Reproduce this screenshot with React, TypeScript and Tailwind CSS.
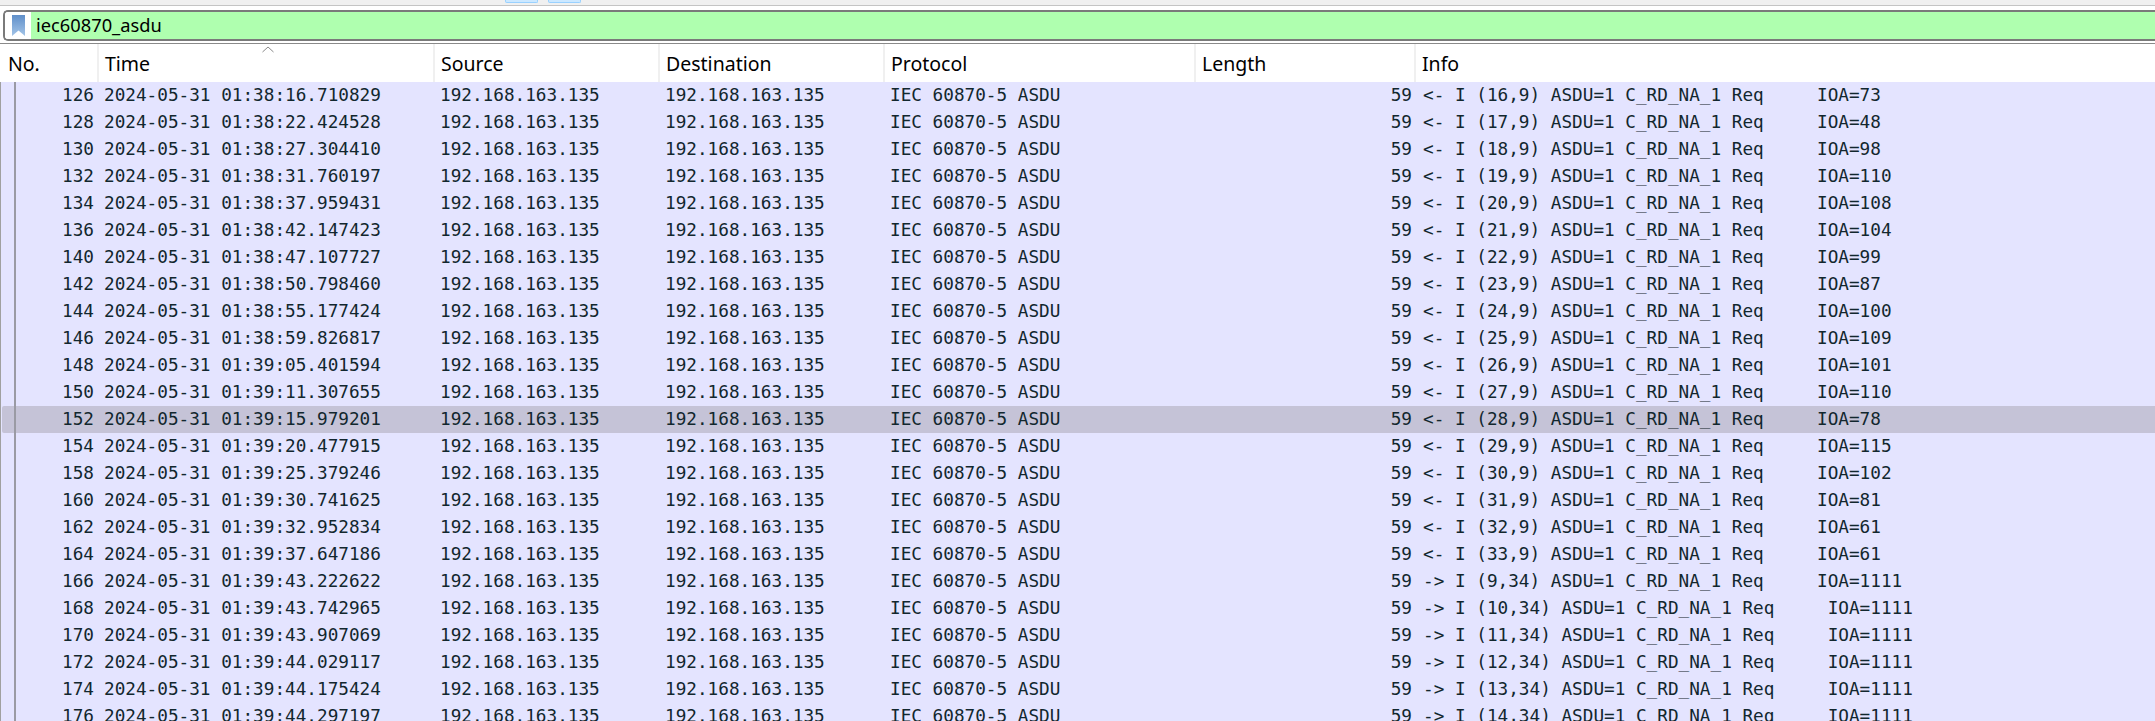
const rows: [string, string, string][] = [
  ["126", "01:38:16.710829", "<- I (16,9) ASDU=1 C_RD_NA_1 Req     IOA=73"],
  ["128", "01:38:22.424528", "<- I (17,9) ASDU=1 C_RD_NA_1 Req     IOA=48"],
  ["130", "01:38:27.304410", "<- I (18,9) ASDU=1 C_RD_NA_1 Req     IOA=98"],
  ["132", "01:38:31.760197", "<- I (19,9) ASDU=1 C_RD_NA_1 Req     IOA=110"],
  ["134", "01:38:37.959431", "<- I (20,9) ASDU=1 C_RD_NA_1 Req     IOA=108"],
  ["136", "01:38:42.147423", "<- I (21,9) ASDU=1 C_RD_NA_1 Req     IOA=104"],
  ["140", "01:38:47.107727", "<- I (22,9) ASDU=1 C_RD_NA_1 Req     IOA=99"],
  ["142", "01:38:50.798460", "<- I (23,9) ASDU=1 C_RD_NA_1 Req     IOA=87"],
  ["144", "01:38:55.177424", "<- I (24,9) ASDU=1 C_RD_NA_1 Req     IOA=100"],
  ["146", "01:38:59.826817", "<- I (25,9) ASDU=1 C_RD_NA_1 Req     IOA=109"],
  ["148", "01:39:05.401594", "<- I (26,9) ASDU=1 C_RD_NA_1 Req     IOA=101"],
  ["150", "01:39:11.307655", "<- I (27,9) ASDU=1 C_RD_NA_1 Req     IOA=110"],
  ["152", "01:39:15.979201", "<- I (28,9) ASDU=1 C_RD_NA_1 Req     IOA=78"],
  ["154", "01:39:20.477915", "<- I (29,9) ASDU=1 C_RD_NA_1 Req     IOA=115"],
  ["158", "01:39:25.379246", "<- I (30,9) ASDU=1 C_RD_NA_1 Req     IOA=102"],
  ["160", "01:39:30.741625", "<- I (31,9) ASDU=1 C_RD_NA_1 Req     IOA=81"],
  ["162", "01:39:32.952834", "<- I (32,9) ASDU=1 C_RD_NA_1 Req     IOA=61"],
  ["164", "01:39:37.647186", "<- I (33,9) ASDU=1 C_RD_NA_1 Req     IOA=61"],
  ["166", "01:39:43.222622", "-> I (9,34) ASDU=1 C_RD_NA_1 Req     IOA=1111"],
  ["168", "01:39:43.742965", "-> I (10,34) ASDU=1 C_RD_NA_1 Req     IOA=1111"],
  ["170", "01:39:43.907069", "-> I (11,34) ASDU=1 C_RD_NA_1 Req     IOA=1111"],
  ["172", "01:39:44.029117", "-> I (12,34) ASDU=1 C_RD_NA_1 Req     IOA=1111"],
  ["174", "01:39:44.175424", "-> I (13,34) ASDU=1 C_RD_NA_1 Req     IOA=1111"],
  ["176", "01:39:44.297197", "-> I (14,34) ASDU=1 C_RD_NA_1 Req     IOA=1111"],
];

function Head({ label, width, last }: { label: string; width: string; last?: boolean }) {
  return (
    <div className={`${width} h-full shrink-0 ${last ? "" : "border-r-2 border-[#f0f0f0]"} pl-[6px] flex items-center`}>
      <span className="text-[19.5px] text-black pt-[1px]">{label}</span>
    </div>
  );
}

export default function App() {
  return (
    <div className="relative w-[2155px] h-[721px] overflow-hidden bg-white font-['Noto_Sans',sans-serif]">
      {/* toolbar remnant */}
      <div className="h-[6px] bg-[#f0f0f0] border-b border-[#c4c4c4] flex gap-[10px] pl-[505px]">
        <div className="w-[33px] h-[3px] bg-[#cce8ff] border-x border-b border-[#99d1ff] rounded-b-[2px]" />
        <div className="w-[33px] h-[3px] bg-[#cce8ff] border-x border-b border-[#99d1ff] rounded-b-[2px]" />
      </div>
      {/* filter bar */}
      <div className="h-[4px]" />
      <div className="h-[31px] ml-[3px] flex border-y-2 border-l-2 border-[#7a7a7a] rounded-l-[5px] overflow-hidden">
        <div className="w-[26px] shrink-0 bg-white flex items-center justify-center">
          <svg width="13" height="21" viewBox="0 0 13 21">
            <defs>
              <linearGradient id="bm" x1="0" y1="0" x2="0" y2="1">
                <stop offset="0" stopColor="#5f8fc9" />
                <stop offset="1" stopColor="#a3c4e8" />
              </linearGradient>
            </defs>
            <path d="M0 0H13V21L6.5 15.5L0 21Z" fill="url(#bm)" />
          </svg>
        </div>
        <div className="flex-1 bg-[#afffaf] pl-[5px] flex items-center text-[18.3px] leading-none text-black">
          iec60870_asdu
        </div>
      </div>
      <div className="h-[1px]" />
      <div className="h-[1px] mt-[1px] bg-[#8a8a8a]" />
      {/* header */}
      <div className="relative h-[38px] flex bg-white pl-[2px]">
        <Head label="No." width="w-[97px]" />
        <Head label="Time" width="w-[336px]" />
        <Head label="Source" width="w-[225px]" />
        <Head label="Destination" width="w-[225px]" />
        <Head label="Protocol" width="w-[311px]" />
        <Head label="Length" width="w-[220px]" />
        <Head label="Info" width="w-[300px]" last />
        <svg className="absolute left-[262px] top-[2px]" width="12" height="7" viewBox="0 0 12 7">
          <path d="M0.5 6L6 1L11.5 6" fill="none" stroke="#8a8a8a" strokeWidth="1" />
        </svg>
      </div>
      {/* packet rows */}
      <div className="relative bg-[#e4e4ff] border-l border-[#a0a0a0] font-['DejaVu_Sans_Mono',monospace] text-[17.7px] text-[#12272e]">
        {rows.map(([no, time, info]) => (
          <div
            key={no}
            className={`h-[27px] flex items-center whitespace-pre ${no === "152" ? "bg-[#c5c3d7] ml-[1px] rounded-l-[2px]" : ""}`}
          >
            <span className={`${no === "152" ? "w-[92px]" : "w-[93px]"} pb-[1px] shrink-0 text-right`}>{no}</span>
            <span className="w-[346px] pl-[10px] pb-[1px] shrink-0">2024-05-31 {time}</span>
            <span className="w-[225px] pb-[1px] shrink-0">192.168.163.135</span>
            <span className="w-[225px] pb-[1px] shrink-0">192.168.163.135</span>
            <span className="w-[300px] pb-[1px] shrink-0">IEC 60870-5 ASDU</span>
            <span className="w-[222px] pb-[1px] shrink-0 text-right">59</span>
            <span className="pl-[11px] pb-[1px] shrink-0">{info}</span>
          </div>
        ))}
        <div className="absolute left-[13px] top-0 bottom-0 w-[2px] bg-[#9a9aa4]" />
      </div>
    </div>
  );
}
